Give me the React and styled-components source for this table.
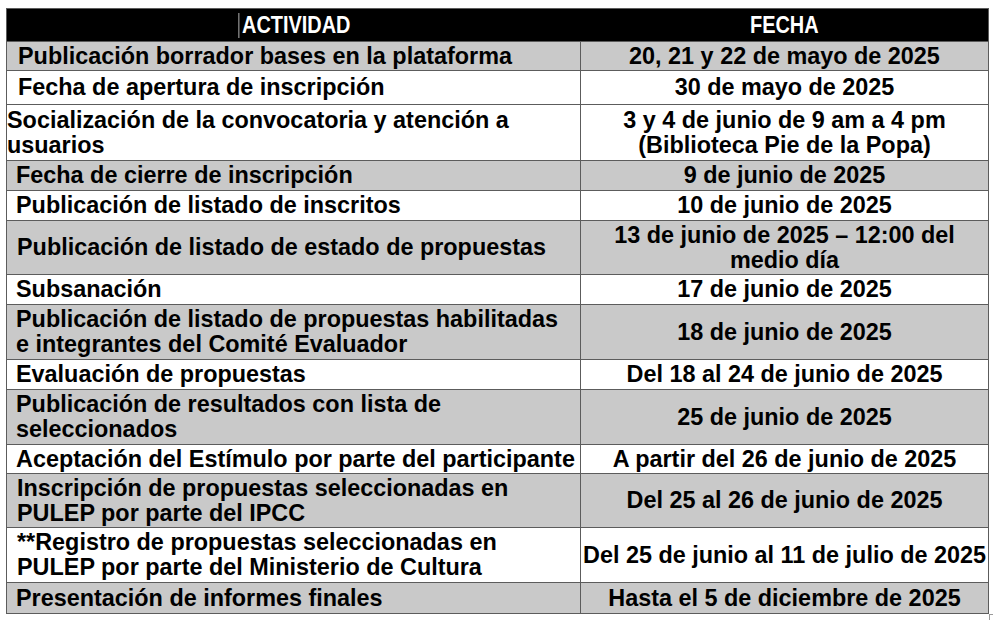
import React from 'react';
import styled, { createGlobalStyle } from 'styled-components';

const GlobalStyle = createGlobalStyle`
  html, body {
    margin: 0;
    padding: 0;
    background: #ffffff;
  }
`;

const Page = styled.div`
  padding: 8px 0 0 6px;
  width: 993px;
  height: 620px;
  box-sizing: border-box;
  overflow: hidden;
`;

const Table = styled.div`
  position: relative;
  width: 983px;
  box-sizing: border-box;
  border: 1px solid #5c5c5c;
  font-family: "Liberation Sans", Arial, sans-serif;
  font-weight: bold;
  color: #000;
`;

const HeaderRow = styled.div`
  display: grid;
  grid-template-columns: 574px 407px;
  height: 32px;
  background: #000;
`;

const HeaderCell = styled.div`
  display: flex;
  align-items: center;
  justify-content: center;
  color: #fff;
  font-size: 24px;
`;

// the header is set in a narrow face; squeeze Arial-metric text to match
const NarrowLabel = styled.span`
  display: inline-flex;
  align-items: center;
  white-space: nowrap;
  transform: scaleX(0.83);
  transform-origin: center;
`;

const Caret = styled.span`
  display: inline-block;
  width: 1.3px;
  height: 25px;
  margin-right: 3px;
  background: #d8d8d8;
`;

const Row = styled.div`
  display: grid;
  grid-template-columns: 574px 407px;
  height: ${({ $h }) => $h}px;
  box-sizing: border-box;
  border-top: 1px solid #5c5c5c;
  background: ${({ $grey }) => ($grey ? '#c9c9c9' : '#ffffff')};
`;

const Cell = styled.div`
  display: flex;
  flex-direction: column;
  justify-content: center;
  align-items: ${({ $center }) => ($center ? 'center' : 'flex-start')};
  text-align: ${({ $center }) => ($center ? 'center' : 'left')};
  padding-left: ${({ $indent }) => $indent || 0}px;
  border-right: ${({ $divider }) => ($divider ? '1px solid #5c5c5c' : 'none')};
  font-size: 23.4px;
  line-height: 25px;
  overflow: visible;
`;

const Line = styled.span`
  white-space: nowrap;
`;

const ResizeHandle = styled.div`
  position: absolute;
  right: -8px;
  bottom: -8px;
  width: 5px;
  height: 5px;
  border: 1px solid #9a9a9a;
  background: #fff;
`;

const rows = [
  { a: ['Publicación borrador bases en la plataforma'], f: ['20, 21 y 22 de mayo de 2025'], grey: true, h: 29, indent: 11 },
  { a: ['Fecha de apertura de inscripción'], f: ['30 de mayo de 2025'], h: 34, indent: 11 },
  { a: ['Socialización de la convocatoria y atención a', 'usuarios'], f: ['3 y 4 de junio de 9 am a 4 pm', '(Biblioteca Pie de la Popa)'], h: 56, indent: 0 },
  { a: ['Fecha de cierre de inscripción'], f: ['9 de junio de 2025'], grey: true, h: 30, indent: 9 },
  { a: ['Publicación de listado de inscritos'], f: ['10 de junio de 2025'], h: 30, indent: 9 },
  { a: ['Publicación de listado de estado de propuestas'], f: ['13 de junio de 2025 – 12:00 del', 'medio día'], grey: true, h: 54, indent: 10 },
  { a: ['Subsanación'], f: ['17 de junio de 2025'], h: 30, indent: 9 },
  { a: ['Publicación de listado de propuestas habilitadas', 'e integrantes del Comité Evaluador'], f: ['18 de junio de 2025'], grey: true, h: 55, indent: 9 },
  { a: ['Evaluación de propuestas'], f: ['Del 18 al 24 de junio de 2025'], h: 30, indent: 9 },
  { a: ['Publicación de resultados con lista de', 'seleccionados'], f: ['25 de junio de 2025'], grey: true, h: 55, indent: 9 },
  { a: ['Aceptación del Estímulo por parte del participante'], f: ['A partir del 26 de junio de 2025'], h: 29, indent: 9 },
  { a: ['Inscripción de propuestas seleccionadas en', 'PULEP por parte del IPCC'], f: ['Del 25 al 26 de junio de 2025'], grey: true, h: 54, indent: 10 },
  { a: ['**Registro de propuestas seleccionadas en', 'PULEP por parte del Ministerio de Cultura'], f: ['Del 25 de junio al 11 de julio de 2025'], h: 55, indent: 10 },
  { a: ['Presentación de informes finales'], f: ['Hasta el 5 de diciembre de 2025'], grey: true, h: 31, indent: 9 },
];

const Lines = ({ items }) =>
  items.map((text, i) => <Line key={i}>{text}</Line>);

const App = () => (
  <Page>
    <GlobalStyle />
    <Table>
      <HeaderRow>
        <HeaderCell>
          <NarrowLabel>
            <Caret />
            ACTIVIDAD
          </NarrowLabel>
        </HeaderCell>
        <HeaderCell>
          <NarrowLabel>FECHA</NarrowLabel>
        </HeaderCell>
      </HeaderRow>
      {rows.map((row, index) => (
        <Row key={index} $grey={row.grey} $h={row.h}>
          <Cell $divider $indent={row.indent}>
            <Lines items={row.a} />
          </Cell>
          <Cell $center>
            <Lines items={row.f} />
          </Cell>
        </Row>
      ))}
      <ResizeHandle />
    </Table>
  </Page>
);

export default App;
